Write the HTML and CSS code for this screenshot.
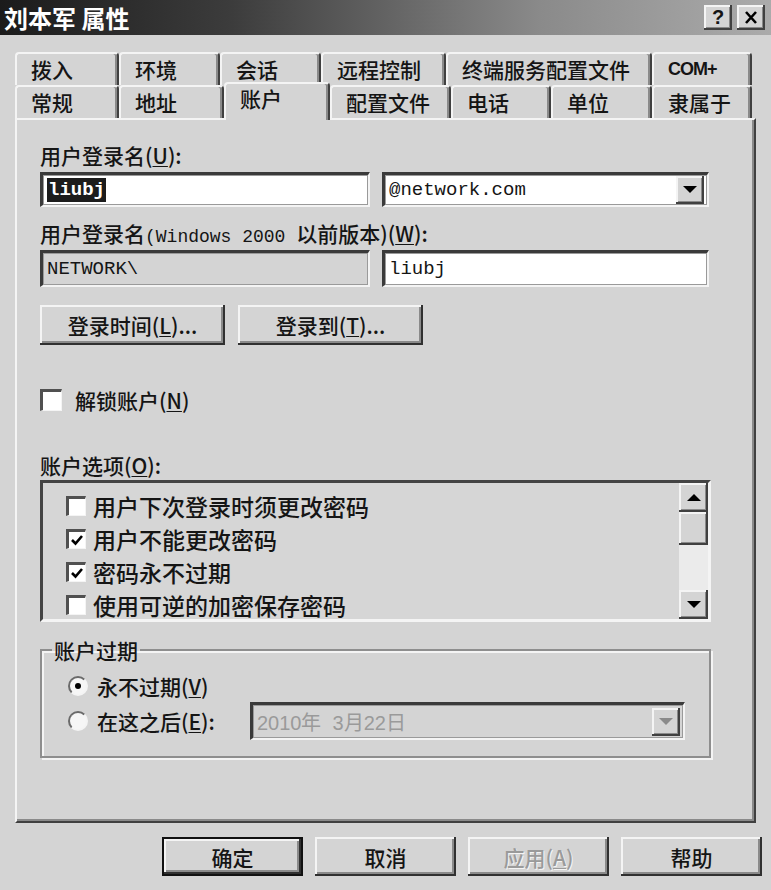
FILE: index.html
```html
<!DOCTYPE html>
<html lang="zh-CN">
<head>
    <meta charset="UTF-8">
    <title>刘本军 属性</title>
    <link rel="stylesheet" href="styles.css">
</head>
<body>
<div class="dialog">
    <div class="titlebar">
        <span class="title">刘本军 属性</span>
        <div class="title-btns">
            <span class="tbtn">?</span>
            <span class="tbtn">
                <svg width="14" height="13" viewBox="0 0 14 13"><path d="M2 1 L12 12 M12 1 L2 12" stroke="#000" stroke-width="2.6"/></svg>
            </span>
        </div>
    </div>

    <div class="content">
        <div class="tabs">
            <div class="tab-row">
                <div class="tab" style="width:104px">拨入</div>
                <div class="tab" style="width:101px">环境</div>
                <div class="tab" style="width:101px">会话</div>
                <div class="tab" style="width:125px">远程控制</div>
                <div class="tab" style="width:206px">终端服务配置文件</div>
                <div class="tab latin" style="width:100px">COM+</div>
            </div>
            <div class="tab-row">
                <div class="tab" style="width:104px">常规</div>
                <div class="tab" style="width:105px">地址</div>
                <div class="tab active" style="width:106px">账户</div>
                <div class="tab" style="width:121px">配置文件</div>
                <div class="tab" style="width:100px">电话</div>
                <div class="tab" style="width:101px">单位</div>
                <div class="tab" style="width:100px">隶属于</div>
            </div>
        </div>

        <div class="panel">
            <div class="field-label">用户登录名(<u>U</u>):</div>
            <div class="field-row">
                <div class="textbox wide"><span class="selected">liubj</span></div>
                <div class="textbox combo">
                    <span>@network.com</span>
                    <span class="drop-btn">
                        <svg width="14" height="8" viewBox="0 0 14 8"><polygon points="0,0 14,0 7,7" fill="#000"/></svg>
                    </span>
                </div>
            </div>

            <div class="field-label gap-top">用户登录名<span class="mono">(Windows 2000 </span>以前版本)(<u>W</u>):</div>
            <div class="field-row">
                <div class="textbox wide readonly">NETWORK\</div>
                <div class="textbox combo tall">liubj</div>
            </div>

            <div class="btn-row">
                <div class="btn small">登录时间(<u>L</u>)...</div>
                <div class="btn small">登录到(<u>T</u>)...</div>
            </div>

            <div class="check-row">
                <span class="check"></span>
                <span>解锁账户(<u>N</u>)</span>
            </div>

            <div class="field-label options-label">账户选项(<u>O</u>):</div>
            <div class="listbox">
                <div class="list-items">
                    <div class="list-item"><span class="check"></span>用户下次登录时须更改密码</div>
                    <div class="list-item"><span class="check on"><svg width="16" height="16" viewBox="0 0 16 16"><path d="M3 8 L6.5 11.5 L13 4" fill="none" stroke="#000" stroke-width="2.6"/></svg></span>用户不能更改密码</div>
                    <div class="list-item"><span class="check on"><svg width="16" height="16" viewBox="0 0 16 16"><path d="M3 8 L6.5 11.5 L13 4" fill="none" stroke="#000" stroke-width="2.6"/></svg></span>密码永不过期</div>
                    <div class="list-item"><span class="check"></span>使用可逆的加密保存密码</div>
                </div>
                <div class="scrollbar">
                    <span class="sb-btn">
                        <svg width="14" height="8" viewBox="0 0 14 8"><polygon points="0,7 14,7 7,0" fill="#000"/></svg>
                    </span>
                    <span class="sb-thumb"></span>
                    <span class="sb-track"></span>
                    <span class="sb-btn">
                        <svg width="14" height="8" viewBox="0 0 14 8"><polygon points="0,0 14,0 7,7" fill="#000"/></svg>
                    </span>
                </div>
            </div>

            <fieldset class="group">
                <legend>账户过期</legend>
                <div class="radio-row first">
                    <span class="radio on"></span>
                    <span>永不过期(<u>V</u>)</span>
                </div>
                <div class="radio-row">
                    <span class="radio"></span>
                    <span class="radio-label">在这之后(<u>E</u>):</span>
                    <div class="textbox date">
                        <span>2010年&nbsp; 3月22日</span>
                        <span class="drop-btn">
                            <svg width="14" height="8" viewBox="0 0 14 8"><polygon points="0,0 14,0 7,7" fill="#8a8a8a"/></svg>
                        </span>
                    </div>
                </div>
            </fieldset>
        </div>

        <div class="actions">
            <div class="btn default">确定</div>
            <div class="btn">取消</div>
            <div class="btn disabled">应用(<u>A</u>)</div>
            <div class="btn">帮助</div>
        </div>
    </div>
</div>
</body>
</html>
```

FILE: styles.css
```css
* {
    box-sizing: border-box;
}
body {
    margin: 0;
    background: #d4d4d4;
    font-family: "Noto Sans CJK SC", "Noto Sans", sans-serif;
    font-weight: 500;
    color: #151515;
}
.dialog {
    width: 771px;
    height: 890px;
    overflow: hidden;
}
u {
    text-decoration-thickness: 1px;
    text-underline-offset: 2px;
}
.mono {
    font-family: "Liberation Mono", monospace;
    font-size: 18px;
    font-weight: normal;
}

/* title bar */
.titlebar {
    height: 35px;
    display: flex;
    align-items: center;
    justify-content: space-between;
    padding: 0 6px 0 4px;
    background: linear-gradient(to right, #1b1b1b 0%, #3c3c3c 30%, #8a8a8a 70%, #ababab 100%);
}
.title {
    color: #fff;
    font-weight: bold;
    font-size: 24px;
    line-height: 35px;
}
.title-btns {
    display: flex;
    gap: 5px;
}
.tbtn {
    width: 28px;
    height: 25px;
    display: flex;
    align-items: center;
    justify-content: center;
    background: #d4d4d4;
    font: bold 20px "Liberation Sans", sans-serif;
    box-shadow: inset -2px -2px #404040, inset 2px 2px #f4f4f4, inset -3px -3px #888;
}

/* tabs */
.content {
    padding: 17px 15px 0 15px;
}
.tab-row {
    display: flex;
    align-items: flex-start;
    height: 33px;
}
.tab {
    height: 33px;
    padding: 0 0 0 14px;
    font-size: 21px;
    line-height: 31px;
    border: 2px solid #f4f4f4;
    border-right-color: #404040;
    border-bottom: none;
    border-radius: 4px 4px 0 0;
    box-shadow: inset -2px 0 #8a8a8a;
    background: #d4d4d4;
}
.tab.latin {
    font-family: "Liberation Sans", sans-serif;
    font-size: 18px;
    font-weight: bold;
    letter-spacing: -1px;
}
.tab.active {
    position: relative;
    z-index: 2;
    height: 38px;
    margin-top: -3px;
    margin-bottom: -2px;
    line-height: 28px;
}

/* page panel */
.panel {
    height: 705px;
    padding: 22px 43px 0 23px;
    border: 2px solid #f4f4f4;
    border-right-color: #404040;
    border-bottom-color: #404040;
    box-shadow: inset -2px -2px #8a8a8a;
    font-size: 21px;
}
.field-label {
    height: 26px;
    line-height: 26px;
}
.field-label.gap-top {
    margin-top: 13px;
}
.field-row {
    display: flex;
    gap: 12px;
    margin-top: 4px;
}
.textbox {
    height: 35px;
    display: flex;
    align-items: center;
    padding: 0 3px 0 4px;
    background: #fff;
    font-family: "Liberation Mono", monospace;
    font-size: 19px;
    font-weight: normal;
    border-top: 3px solid #3a3a3a;
    border-left: 3px solid #3a3a3a;
    border-right: 2px solid #f4f4f4;
    border-bottom: 2px solid #f4f4f4;
    box-shadow: 0 0 0 1px #9a9a9a inset;
}
.textbox.wide {
    width: 330px;
}
.textbox.combo {
    width: 327px;
    justify-content: space-between;
}
.textbox.tall,
.textbox.readonly {
    height: 37px;
}
.textbox.readonly {
    background: #d4d4d4;
}
.selected {
    background: #1c1c1c;
    color: #fff;
    font-weight: bold;
    padding: 0 1px;
    line-height: 24px;
}
.drop-btn {
    width: 28px;
    height: 28px;
    display: flex;
    align-items: center;
    justify-content: center;
    background: #d4d4d4;
    box-shadow: inset -2px -2px #404040, inset 2px 2px #f4f4f4, inset -3px -3px #8a8a8a;
}

/* buttons */
.btn-row {
    display: flex;
    gap: 13px;
    margin-top: 18px;
}
.btn {
    height: 40px;
    display: flex;
    align-items: center;
    justify-content: center;
    background: #d4d4d4;
    font-size: 21px;
    box-shadow: inset -2px -2px #303030, inset 2px 2px #f4f4f4, inset -4px -4px #8a8a8a;
}
.btn.small {
    width: 185px;
}

/* checkbox */
.check-row {
    display: flex;
    align-items: center;
    gap: 13px;
    height: 26px;
    margin-top: 42px;
}
.check {
    width: 22px;
    height: 22px;
    flex: none;
    display: inline-flex;
    align-items: center;
    justify-content: center;
    background: #fff;
    border-top: 3px solid #505050;
    border-left: 3px solid #505050;
    border-right: 1px solid #f4f4f4;
    border-bottom: 1px solid #f4f4f4;
}
.options-label {
    margin-top: 39px;
}

/* list box */
.listbox {
    display: flex;
    height: 142px;
    margin-top: 2px;
    background: #d6d6d6;
    border-top: 3px solid #444;
    border-left: 3px solid #444;
    border-right: 3px solid #f4f4f4;
    border-bottom: 3px solid #f4f4f4;
}
.list-items {
    flex: 1;
    padding: 6px 0 0 23px;
    font-size: 23px;
}
.list-item {
    height: 33px;
    display: flex;
    align-items: center;
    gap: 7px;
}
.list-item .check {
    width: 20px;
    height: 20px;
}
.scrollbar {
    width: 29px;
    display: flex;
    flex-direction: column;
}
.sb-btn,
.sb-thumb {
    display: flex;
    align-items: center;
    justify-content: center;
    background: #d4d4d4;
    box-shadow: inset -2px -2px #404040, inset 2px 2px #f4f4f4, inset -3px -3px #8a8a8a;
}
.sb-btn {
    height: 29px;
}
.sb-thumb {
    height: 33px;
}
.sb-track {
    flex: 1;
    background: #ebebeb;
}

/* group box */
.group {
    margin: 15px 0 0;
    padding: 0 0 16px 26px;
    border: 2px solid #8e8e8e;
    box-shadow: inset 2px 2px #f4f4f4, 2px 2px #f4f4f4;
}
.group legend {
    margin-left: -16px;
    padding: 0 2px;
    font-size: 21px;
    line-height: 26px;
}
.radio-row {
    display: flex;
    align-items: center;
    gap: 9px;
    height: 38px;
    margin-top: 1px;
}
.radio-row.first {
    height: 30px;
    margin-top: 8px;
}
.radio {
    width: 20px;
    height: 20px;
    flex: none;
    display: inline-flex;
    align-items: center;
    justify-content: center;
    border-radius: 50%;
    background: #f6f6f6;
    border: 2px solid;
    border-color: #6a6a6a #f4f4f4 #f4f4f4 #6a6a6a;
}
.radio.on::after {
    content: "";
    width: 6px;
    height: 6px;
    border-radius: 50%;
    background: #000;
}
.radio-label {
    width: 144px;
}
.textbox.date {
    width: 435px;
    height: 38px;
    justify-content: space-between;
    background: #d4d4d4;
    color: #9a9a9a;
    font-family: "Liberation Sans", sans-serif;
    font-size: 20px;
}

/* bottom buttons */
.actions {
    display: flex;
    justify-content: flex-end;
    gap: 12px;
    margin-top: 14px;
    margin-right: -6px;
}
.actions .btn {
    width: 141px;
    height: 39px;
}
.btn.default {
    border: 2px solid #111;
}
.btn.disabled {
    color: #9a9a9a;
    text-shadow: 1px 1px #f4f4f4;
}
```
